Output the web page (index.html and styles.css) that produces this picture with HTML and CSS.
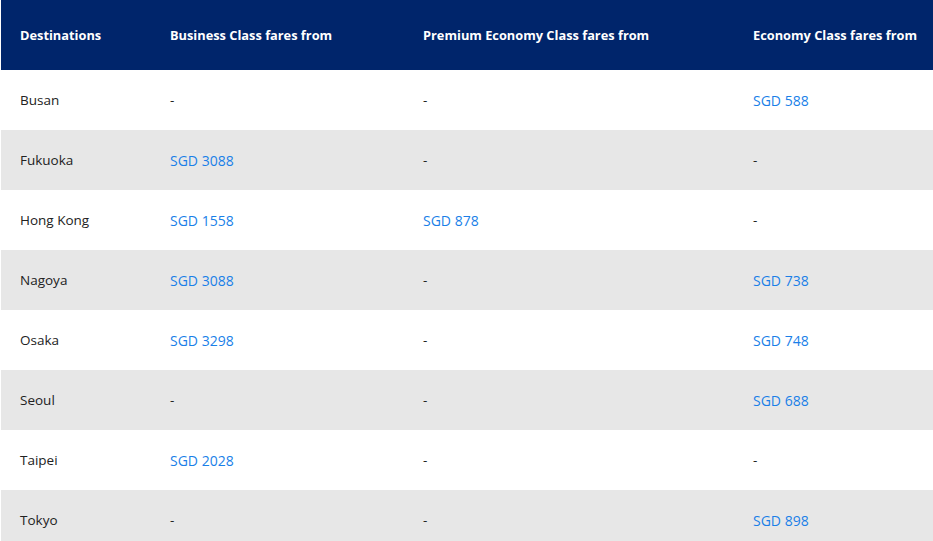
FILE: index.html
```html
<!DOCTYPE html>
<html>
<head>
<meta charset="utf-8">
<link rel="stylesheet" href="styles.css">
</head>
<body>
<table class="fares">
  <colgroup>
    <col class="c1"><col class="c2"><col class="c3"><col class="c4">
  </colgroup>
  <thead>
    <tr><th>Destinations</th><th>Business Class fares from</th><th>Premium Economy Class fares from</th><th>Economy Class fares from</th></tr>
  </thead>
  <tbody>
    <tr><td>Busan</td><td>-</td><td>-</td><td><a>SGD 588</a></td></tr>
    <tr><td>Fukuoka</td><td><a>SGD 3088</a></td><td>-</td><td>-</td></tr>
    <tr><td>Hong Kong</td><td><a>SGD 1558</a></td><td><a>SGD 878</a></td><td>-</td></tr>
    <tr><td>Nagoya</td><td><a>SGD 3088</a></td><td>-</td><td><a>SGD 738</a></td></tr>
    <tr><td>Osaka</td><td><a>SGD 3298</a></td><td>-</td><td><a>SGD 748</a></td></tr>
    <tr><td>Seoul</td><td>-</td><td>-</td><td><a>SGD 688</a></td></tr>
    <tr><td>Taipei</td><td><a>SGD 2028</a></td><td>-</td><td>-</td></tr>
    <tr><td>Tokyo</td><td>-</td><td>-</td><td><a>SGD 898</a></td></tr>
  </tbody>
</table>
</body>
</html>
```
FILE: styles.css
```css
html, body { margin: 0; padding: 0; background: #fff; }
body { padding-left: 1px; font-family: "Open Sans", "Liberation Sans", sans-serif; font-size: 13.5px; color: #222; }
.fares { border-collapse: collapse; table-layout: fixed; width: 932px; }
.c1 { width: 149px; }
.c2 { width: 253px; }
.c3 { width: 330px; }
.c4 { width: 200px; }
.fares th { background: #00256b; color: #fff; font-weight: 700; text-align: left; height: 70px; padding: 0 0 0 20px; font-size: 12.8px; white-space: nowrap; }
.fares td { height: 60px; padding: 0 0 0 20px; }
.fares th:first-child, .fares td:first-child { padding-left: 19px; }
.fares tbody tr:nth-child(even) td { background: #e7e7e7; }
.fares a { color: #1a7fe8; font-size: 14px; }
```
